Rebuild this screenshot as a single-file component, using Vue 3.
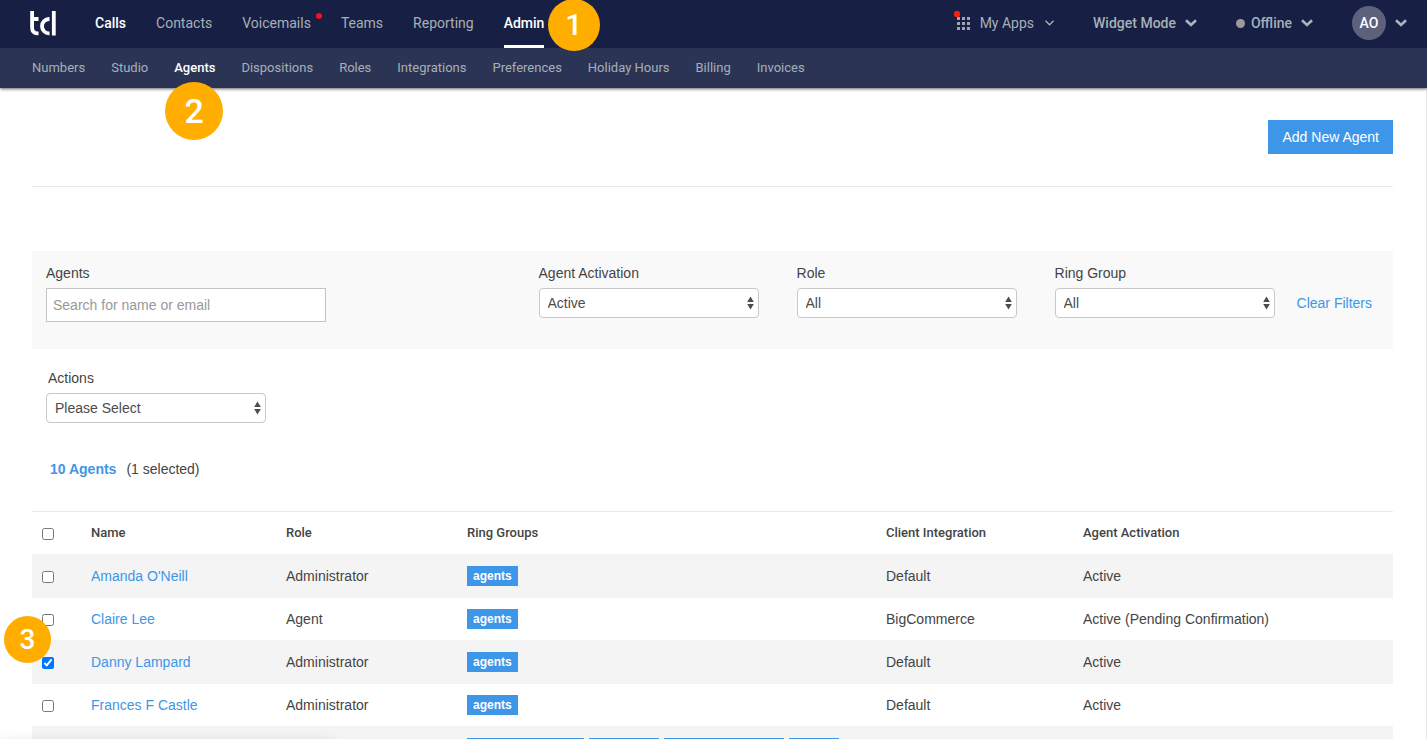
<script setup>
import { ref } from 'vue'

const mainNav = [
  { label: 'Calls', bright: true },
  { label: 'Contacts' },
  { label: 'Voicemails', alert: true },
  { label: 'Teams' },
  { label: 'Reporting' },
  { label: 'Admin', bright: true, current: true, step: 1 },
]

const subNav = [
  { label: 'Numbers' },
  { label: 'Studio' },
  { label: 'Agents', current: true, step: 2 },
  { label: 'Dispositions' },
  { label: 'Roles' },
  { label: 'Integrations' },
  { label: 'Preferences' },
  { label: 'Holiday Hours' },
  { label: 'Billing' },
  { label: 'Invoices' },
]

const filters = [
  { id: 'activation', label: 'Agent Activation', value: 'Active' },
  { id: 'role', label: 'Role', value: 'All' },
  { id: 'ring-group', label: 'Ring Group', value: 'All' },
]

const agents = ref([
  { name: "Amanda O'Neill", role: 'Administrator', client: 'Default', status: 'Active', checked: false },
  { name: 'Claire Lee', role: 'Agent', client: 'BigCommerce', status: 'Active (Pending Confirmation)', checked: false },
  { name: 'Danny Lampard', role: 'Administrator', client: 'Default', status: 'Active', checked: true, step: 3 },
  { name: 'Frances F Castle', role: 'Administrator', client: 'Default', status: 'Active', checked: false },
])

const partialTags = [117, 70, 120, 50]
</script>

<template>
  <div class="page">
    <header class="header">
      <div class="topbar">
        <a href="#" class="logo" aria-label="td">
          <svg width="26" height="25" viewBox="0 0 26 25" fill="none" stroke="#fff" stroke-width="3.800">
            <path d="M2.100 0V16.500Q2.100 22.300 7.500 22.300H8.500M2.100 8H8.500" />
            <path d="M19.500 8H19A7 7.150 0 0 0 19 22.300H19.500" />
            <path d="M23.800 0V24.500" />
          </svg>
        </a>
        <nav class="main-nav" aria-label="Main">
          <a v-for="item in mainNav" :key="item.label" href="#" :class="{ bright: item.bright, current: item.current }">
            {{ item.label }}
            <span v-if="item.alert" class="alert-dot"></span>
            <span v-if="item.step" class="step step-one">{{ item.step }}</span>
          </a>
        </nav>
        <div class="tools">
          <button type="button" class="tool apps">
            <span class="apps-icon">
              <svg width="13" height="13" viewBox="0 0 13 13" fill="#a3a3b0">
                <path d="M0 0h3v3H0zM5 0h3v3H5zM10 0h3v3h-3zM0 5h3v3H0zM5 5h3v3H5zM10 5h3v3h-3zM0 10h3v3H0zM5 10h3v3H5zM10 10h3v3h-3z" />
              </svg>
            </span>
            My Apps
            <svg class="thin" width="9" height="6" viewBox="0 0 9 6" fill="none" stroke="#a9b2b8" stroke-width="1.300">
              <path d="M.5.700L4.500 4.800L8.500.700" />
            </svg>
          </button>
          <button type="button" class="tool">
            Widget Mode
            <svg width="12" height="8" viewBox="0 0 12 8" fill="none" stroke="#a9b6ba" stroke-width="2.600"><path d="M1 1.200L6 6L11 1.200" /></svg>
          </button>
          <button type="button" class="tool">
            <span class="status-dot"></span>
            Offline
            <svg width="12" height="8" viewBox="0 0 12 8" fill="none" stroke="#a9b6ba" stroke-width="2.600"><path d="M1 1.200L6 6L11 1.200" /></svg>
          </button>
          <button type="button" class="tool">
            <span class="avatar">AO</span>
            <svg width="12" height="8" viewBox="0 0 12 8" fill="none" stroke="#a9b6ba" stroke-width="2.600"><path d="M1 1.200L6 6L11 1.200" /></svg>
          </button>
        </div>
      </div>
      <nav class="sub-nav" aria-label="Admin">
        <a v-for="item in subNav" :key="item.label" href="#" :class="{ current: item.current }">
          {{ item.label }}
          <span v-if="item.step" class="step step-two">{{ item.step }}</span>
        </a>
      </nav>
    </header>

    <main class="content">
      <div class="toolbar">
        <button type="button" class="add">Add New Agent</button>
      </div>

      <form class="filters" @submit.prevent>
        <div class="field search">
          <label for="search">Agents</label>
          <input id="search" type="text" placeholder="Search for name or email" />
        </div>
        <div v-for="f in filters" :key="f.id" class="field">
          <label :for="f.id">{{ f.label }}</label>
          <div class="select">
            <select :id="f.id"><option>{{ f.value }}</option></select>
            <svg width="7" height="14" viewBox="0 0 7 14" fill="#4c4c4c"><path d="M3.500 0.500L6.800 6H.2zM3.500 13.500L6.800 8H.2z" /></svg>
          </div>
        </div>
        <a href="#" class="clear">Clear Filters</a>
      </form>

      <div class="field actions">
        <label for="actions">Actions</label>
        <div class="select">
          <select id="actions"><option>Please Select</option></select>
          <svg width="7" height="14" viewBox="0 0 7 14" fill="#4c4c4c"><path d="M3.500 0.500L6.800 6H.2zM3.500 13.500L6.800 8H.2z" /></svg>
        </div>
      </div>

      <p class="summary"><strong>10 Agents</strong><span>(1 selected)</span></p>

      <table>
        <colgroup>
          <col class="c-check" /><col class="c-name" /><col class="c-role" /><col class="c-groups" /><col class="c-client" /><col />
        </colgroup>
        <thead>
          <tr>
            <th><input type="checkbox" aria-label="Select all agents" /></th>
            <th>Name</th>
            <th>Role</th>
            <th>Ring Groups</th>
            <th>Client Integration</th>
            <th>Agent Activation</th>
          </tr>
        </thead>
        <tbody>
          <tr v-for="a in agents" :key="a.name">
            <td>
              <input v-model="a.checked" type="checkbox" :aria-label="a.name" />
              <span v-if="a.step" class="step step-three">{{ a.step }}</span>
            </td>
            <td><a href="#">{{ a.name }}</a></td>
            <td>{{ a.role }}</td>
            <td><div class="tags"><span class="tag">agents</span></div></td>
            <td>{{ a.client }}</td>
            <td>{{ a.status }}</td>
          </tr>
          <tr>
            <td></td>
            <td></td>
            <td></td>
            <td><div class="tags"><span v-for="(w, i) in partialTags" :key="i" class="tag" :style="{ width: w + 'px' }"></span></div></td>
            <td></td>
            <td></td>
          </tr>
        </tbody>
      </table>
    </main>
    <div class="bottom-shade"></div>
  </div>
</template>

<style>
body {
  margin: 0;
  background: #fff;
}
</style>

<style scoped>
* {
  box-sizing: border-box;
}
.page {
  position: relative;
  display: flex;
  flex-direction: column;
  height: 100vh;
  overflow: hidden;
  color: #444;
  font: 14px/20px "Liberation Sans", Arial, sans-serif;
}
a {
  color: #3d96e8;
  text-decoration: none;
}
button {
  font: inherit;
  border: 0;
  cursor: pointer;
}
.header {
  position: relative;
  z-index: 2;
  flex: none;
  font-family: Roboto, sans-serif;
  font-weight: 500;
  box-shadow: 0 1px 3px rgba(0, 0, 0, 0.6);
}
.topbar {
  display: flex;
  align-items: center;
  height: 48px;
  padding: 0 20px 2px 30px;
  background: #181f44;
}
.logo {
  display: flex;
  width: 65px;
}
.main-nav {
  display: flex;
  gap: 30px;
}
.main-nav a {
  position: relative;
  display: flex;
  align-items: center;
  height: 46px;
  color: #a5b0b5;
  font-weight: 400;
}
.main-nav .bright {
  color: #fff;
  font-weight: 500;
}
.main-nav .current::after {
  content: "";
  position: absolute;
  left: 0;
  right: 0;
  bottom: -2px;
  height: 3px;
  background: #fff;
}
.alert-dot {
  position: absolute;
  top: 13px;
  right: -11px;
  width: 6px;
  height: 6px;
  border-radius: 50%;
  background: #fc0d1b;
}
.step {
  position: absolute;
  z-index: 3;
  display: flex;
  align-items: center;
  justify-content: center;
  border-radius: 50%;
  background: #ffae00;
  color: #fff;
  font-family: Roboto, sans-serif;
  font-weight: 500;
}
.step-one {
  top: -1px;
  left: 44px;
  width: 52px;
  height: 52px;
  font-size: 30px;
}
.step-two {
  top: 34px;
  left: -9px;
  width: 58px;
  height: 58px;
  font-size: 34px;
}
.step-three {
  top: -25px;
  left: -28px;
  width: 47px;
  height: 47px;
  font-size: 28px;
}
.tools {
  display: flex;
  align-items: center;
  gap: 39px;
  margin-left: auto;
}
.tool {
  display: flex;
  align-items: center;
  padding: 0;
  background: none;
  color: #a5b0b5;
}
.tool svg {
  margin-left: 9px;
}
.apps {
  font-weight: 400;
}
.tool .thin {
  margin-left: 11px;
}
.apps-icon {
  position: relative;
  display: flex;
  margin-right: 10px;
}
.apps-icon svg {
  margin: 0;
}
.apps-icon::after {
  content: "";
  position: absolute;
  top: -6px;
  left: -3px;
  width: 6px;
  height: 6px;
  border-radius: 2px;
  background: #fc1d0b;
}
.status-dot {
  width: 9px;
  height: 9px;
  margin-right: 6px;
  border-radius: 50%;
  background: #9b9b9b;
}
.avatar {
  display: flex;
  align-items: center;
  justify-content: center;
  width: 34px;
  height: 34px;
  border-radius: 50%;
  background: #5d617c;
  color: #fff;
}
.sub-nav {
  display: flex;
  gap: 26px;
  height: 40px;
  padding: 0 32px;
  background: #2c3456;
  font-size: 13px;
  font-weight: 400;
}
.sub-nav a {
  position: relative;
  display: flex;
  align-items: center;
  color: #a5b0b5;
}
.sub-nav .current {
  color: #fff;
  font-weight: 500;
}
.content {
  flex: 1;
  min-height: 0;
  padding: 0 33px 0 32px;
  border-right: 1px solid #e8e8e8;
}
.toolbar {
  display: flex;
  justify-content: flex-end;
  padding: 32px 0;
  border-bottom: 1px solid #eaeaea;
}
.add {
  height: 34px;
  padding: 0 14px;
  background: #3d96e8;
  color: #fff;
}
.filters {
  display: flex;
  gap: 38px;
  height: 98px;
  margin-top: 64px;
  padding: 12px 21px 0 14px;
  background: #f9f9f9;
}
.field label {
  display: block;
  margin-bottom: 5px;
}
.search {
  margin-right: auto;
}
.search input {
  width: 280px;
  height: 34px;
  padding: 0 6px;
  border: 1px solid #c4c4c4;
  border-radius: 0;
  background: #fff;
  color: #444;
  font: inherit;
}
.search input::placeholder {
  color: #999;
}
.select {
  position: relative;
  width: 220px;
}
.select select {
  display: block;
  width: 100%;
  height: 30px;
  padding: 0 8px;
  appearance: none;
  border: 1px solid #c8c8c8;
  border-radius: 4px;
  background: #fff;
  color: #4c4c4c;
  font: inherit;
}
.select svg {
  position: absolute;
  top: 8px;
  right: 5px;
  pointer-events: none;
}
.clear {
  margin: 30px 0 0 -16px;
}
.actions {
  padding: 19px 14px 0;
}
.actions label {
  padding-left: 2px;
}
.summary {
  display: flex;
  gap: 10px;
  margin: 36px 0 32px 18px;
}
.summary strong {
  color: #3d96e8;
}
table {
  width: 100%;
  table-layout: fixed;
  border-spacing: 0;
  border-top: 1px solid #eaeaea;
}
.c-check {
  width: 59px;
}
.c-name {
  width: 195px;
}
.c-role {
  width: 181px;
}
.c-groups {
  width: 419px;
}
.c-client {
  width: 197px;
}
th {
  height: 42px;
  padding: 0;
  text-align: left;
  font: 500 13px/20px Roboto, "Liberation Sans", sans-serif;
}
td {
  position: relative;
  height: 43px;
  padding: 0;
  border-top: 1px solid #f4f4f4;
}
tbody tr:nth-child(odd) {
  background: #f4f4f4;
}
th input,
td input {
  display: block;
  width: 12px;
  height: 12px;
  margin: 1px 0 0 10px;
}
.tags {
  display: flex;
  gap: 5px;
}
.tag {
  height: 20px;
  padding: 0 6px;
  background: #3d96e8;
  color: #fff;
  font-size: 12px;
  font-weight: 700;
}
.bottom-shade {
  position: absolute;
  left: 0;
  bottom: -12px;
  width: 335px;
  height: 10px;
  box-shadow: 0 0 12px rgba(0, 0, 0, 0.12);
}
</style>
